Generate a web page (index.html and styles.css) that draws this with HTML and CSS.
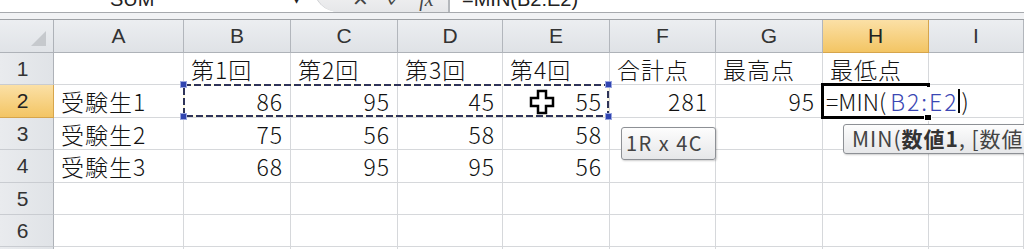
FILE: index.html
```html
<!DOCTYPE html>
<html lang="ja">
<head>
  <meta charset="UTF-8">
  <title>MIN関数</title>
  <link rel="stylesheet" href="styles.css">
</head>
<body>
  <!-- 数式バー (上半分は画面外) -->
  <div class="formula-bar">
    <div class="name-box">SUM</div>
    <div class="name-arrow">▾</div>
    <div class="bar-buttons">
      <span class="btn-cancel">✕</span>
      <span class="btn-ok">✓</span>
      <span class="btn-fx"><i>fx</i></span>
    </div>
    <div class="bar-formula">=MIN(B2:E2)</div>
  </div>
  <div class="bar-gap"></div>

  <div class="sheet">
    <div class="corner"><span class="corner-tri"></span></div>
    <div class="col-head">A</div>
    <div class="col-head">B</div>
    <div class="col-head">C</div>
    <div class="col-head">D</div>
    <div class="col-head">E</div>
    <div class="col-head">F</div>
    <div class="col-head">G</div>
    <div class="col-head active">H</div>
    <div class="col-head">I</div>

    <div class="row-head">1</div>
    <div class="cell"></div>
    <div class="cell">第1回</div>
    <div class="cell">第2回</div>
    <div class="cell">第3回</div>
    <div class="cell">第4回</div>
    <div class="cell">合計点</div>
    <div class="cell">最高点</div>
    <div class="cell">最低点</div>
    <div class="cell"></div>

    <div class="row-head active">2</div>
    <div class="cell">受験生1</div>
    <div class="cell num">86</div>
    <div class="cell num">95</div>
    <div class="cell num">45</div>
    <div class="cell num">55</div>
    <div class="cell num">281</div>
    <div class="cell num">95</div>
    <div class="cell editing">
      <div class="editor">=MIN(<span class="ref">B2:E2</span><span class="caret"></span>)</div>
    </div>
    <div class="cell"></div>

    <div class="row-head">3</div>
    <div class="cell">受験生2</div>
    <div class="cell num">75</div>
    <div class="cell num">56</div>
    <div class="cell num">58</div>
    <div class="cell num">58</div>
    <div class="cell"></div>
    <div class="cell"></div>
    <div class="cell"></div>
    <div class="cell"></div>

    <div class="row-head">4</div>
    <div class="cell">受験生3</div>
    <div class="cell num">68</div>
    <div class="cell num">95</div>
    <div class="cell num">95</div>
    <div class="cell num">56</div>
    <div class="cell"></div>
    <div class="cell"></div>
    <div class="cell"></div>
    <div class="cell"></div>

    <div class="row-head">5</div>
    <div class="cell"></div>
    <div class="cell"></div>
    <div class="cell"></div>
    <div class="cell"></div>
    <div class="cell"></div>
    <div class="cell"></div>
    <div class="cell"></div>
    <div class="cell"></div>
    <div class="cell"></div>

    <div class="row-head">6</div>
    <div class="cell"></div>
    <div class="cell"></div>
    <div class="cell"></div>
    <div class="cell"></div>
    <div class="cell"></div>
    <div class="cell"></div>
    <div class="cell"></div>
    <div class="cell"></div>
    <div class="cell"></div>

    <div class="row-head"></div>
    <div class="cell"></div>
    <div class="cell"></div>
    <div class="cell"></div>
    <div class="cell"></div>
    <div class="cell"></div>
    <div class="cell"></div>
    <div class="cell"></div>
    <div class="cell"></div>
    <div class="cell"></div>

    <!-- 参照範囲 B2:E2 の点線枠 -->
    <div class="marquee">
      <svg width="426" height="33" viewBox="0 0 426 33">
        <rect x="1" y="1" width="424" height="31" fill="none" stroke="#fffbe0" stroke-width="2"/>
        <rect x="1" y="1" width="424" height="31" fill="none" stroke="#2e3358" stroke-width="2" stroke-dasharray="7 3"/>
      </svg>
      <span class="handle tl"></span>
      <span class="handle bl"></span>
      <span class="handle tr"></span>
      <span class="handle br"></span>
    </div>

    <!-- マウスカーソル -->
    <svg class="cursor" width="26" height="26" viewBox="0 0 26 26">
      <polygon points="9,2 17,2 17,9 24,9 24,17 17,17 17,24 9,24 9,17 2,17 2,9 9,9" fill="#fff" stroke="#000" stroke-width="2.5"/>
    </svg>

    <!-- アクティブセル H2 -->
    <div class="active-cell"><span class="fill-handle"></span></div>

    <div class="tip tip-size">1R x 4C</div>
    <div class="tip tip-func">MIN(<b>数値1</b>, [数値2], ...)</div>
  </div>
</body>
</html>
```

FILE: styles.css
```css
body {
  margin: 0;
  background: #fff;
  font-family: "Noto Sans CJK JP", sans-serif;
  color: #111;
  overflow: hidden;
}

/* 数式バー */
.formula-bar {
  display: flex;
  height: 12px;
  overflow: hidden;
  border-bottom: 1px solid #a6a9ad;
  background: #fff;
  font-family: "Liberation Sans", sans-serif;
  font-size: 20px;
  line-height: 20px;
  color: #222;
}
.formula-bar > div {
  align-self: flex-end;
  margin-bottom: 3px;
}
.name-box {
  width: 180px;
  padding-left: 110px;
  box-sizing: border-box;
}
.name-arrow {
  width: 20px;
  margin-left: 113px;
  font-size: 14px;
}
.formula-bar > .bar-buttons {
  display: flex;
  width: 137px;
  height: 30px;
  margin: 0;
  padding-left: 30px;
  box-sizing: border-box;
  align-items: flex-end;
  background: linear-gradient(#f6f6f6, #e6e7e9);
  border-radius: 0 0 0 26px;
  border-left: 1px solid #c8cacd;
  border-right: 2px solid #b5b8bc;
}
.bar-buttons span {
  width: 33px;
  text-align: center;
  color: #444;
  line-height: 20px;
  margin-bottom: 3px;
}
.btn-fx i {
  font-family: "Liberation Serif", serif;
}
.bar-formula {
  padding-left: 12px;
}

.bar-gap {
  height: 6px;
  background: #f1f2f4;
  border-bottom: 1px solid #9c9fa3;
}

/* シート */
.sheet {
  position: relative;
  display: grid;
  grid-template-columns: 54px 130px 107px 107px 105px 107px 106px 107px 106px 1fr;
  grid-template-rows: 33px 32px 33px 32px 33px 32px 32px 32px;
}
.corner,
.col-head,
.row-head,
.cell {
  box-sizing: border-box;
  border-right: 1px solid #d6d8db;
  border-bottom: 1px solid #d6d8db;
  display: flex;
  align-items: center;
  white-space: nowrap;
}
.corner {
  position: relative;
  background: linear-gradient(#eceef1, #e0e3e7);
  border-right-color: #aeb2b8;
  border-bottom-color: #aeb2b8;
}
.corner-tri {
  position: absolute;
  right: 7px;
  bottom: 6px;
  width: 0;
  height: 0;
  border-left: 15px solid transparent;
  border-bottom: 15px solid #c6c9cd;
}
.col-head {
  justify-content: center;
  background: linear-gradient(#eceef1, #dfe2e6);
  border-right-color: #b2b6bc;
  border-bottom-color: #aeb2b8;
  font-family: "Liberation Sans", sans-serif;
  font-size: 21px;
  color: #333;
}
.row-head {
  justify-content: center;
  padding-right: 8px;
  background: linear-gradient(90deg, #e9ebee, #e0e3e7);
  border-right-color: #aeb2b8;
  border-bottom-color: #c9ccd1;
  font-family: "Liberation Sans", sans-serif;
  font-size: 21px;
  color: #333;
}
.col-head.active,
.row-head.active {
  background: linear-gradient(#fbe0a6, #f3c564);
  border-color: #d6a54c;
  color: #222;
}
.cell {
  padding: 0 7px;
  font-size: 23px;
  font-weight: 300;
  letter-spacing: 1px;
}
.num {
  justify-content: flex-end;
}

/* 編集中のセル: 右の枠線の上にはみ出す */
.editing {
  overflow: visible;
  padding-left: 3px;
  letter-spacing: 0;
}
.editor {
  position: relative;
  z-index: 5;
  display: flex;
  align-items: center;
  height: 28px;
  padding-right: 4px;
  background: #fff;
}
.ref {
  color: #3a47b4;
  margin-left: 4px;
  letter-spacing: 2px;
}
.caret {
  width: 2px;
  height: 24px;
  background: #000;
  margin: 0 1px 0 0;
}

/* 参照範囲の点線枠 */
.marquee {
  position: absolute;
  grid-column: 3 / 7;
  grid-row: 3 / 4;
  top: -1px;
  left: -1px;
  width: 426px;
  height: 33px;
  z-index: 2;
  pointer-events: none;
}
.marquee svg {
  display: block;
}
.handle {
  position: absolute;
  width: 5px;
  height: 5px;
  background: #3044b0;
  border: 1px solid #9aa6e0;
}
.handle.tl { left: -3px; top: -3px; }
.handle.bl { left: -3px; bottom: -3px; }
.handle.tr { right: -3px; top: -3px; }
.handle.br { right: -3px; bottom: -3px; }

.cursor {
  position: absolute;
  grid-column: 6 / 7;
  grid-row: 3 / 4;
  left: 26px;
  top: 4px;
  z-index: 4;
}

/* アクティブセル */
.active-cell {
  position: absolute;
  grid-column: 9 / 10;
  grid-row: 3 / 4;
  top: -2px;
  left: -2px;
  right: -1px;
  bottom: -1px;
  border: 3px solid #000;
  z-index: 4;
}
.fill-handle {
  position: absolute;
  right: -5px;
  bottom: -5px;
  width: 6px;
  height: 6px;
  background: #000;
  border: 1px solid #fff;
}

/* ツールチップ */
.tip {
  position: absolute;
  z-index: 6;
  box-sizing: border-box;
  background: linear-gradient(#fdfdfd, #e6e7e9);
  border: 1px solid #8d9095;
  border-radius: 3px;
  box-shadow: 1px 1px 2px rgba(0, 0, 0, 0.2);
  color: #444;
  white-space: nowrap;
  font-size: 20px;
  line-height: 30px;
}
.tip-size {
  left: 621px;
  top: 107px;
  width: 95px;
  height: 33px;
  padding-left: 4px;
  letter-spacing: 1.5px;
}
.tip-func {
  left: 843px;
  top: 104px;
  height: 30px;
  line-height: 27px;
  padding: 0 8px;
  font-size: 21px;
  letter-spacing: 1px;
}
.tip-func b {
  color: #333;
}
```
